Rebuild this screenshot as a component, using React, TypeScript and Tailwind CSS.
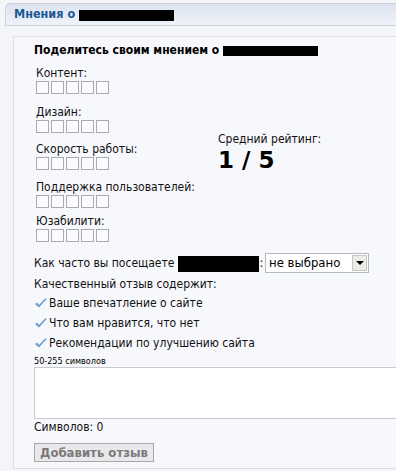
import React from 'react';

const font = { fontFamily: "Tahoma, 'DejaVu Sans Condensed', 'Liberation Sans', sans-serif" };

const Redacted = ({ w, h = 12 }: { w: number; h?: number }) => (
  <span className="inline-block bg-black align-middle" style={{ width: w, height: h }} />
);

const Stars = () => (
  <div className="flex gap-[2px] mt-[1px]">
    {[0, 1, 2, 3, 4].map((i) => (
      <span key={i} className="w-[13px] h-[13px] border border-[#a9abb0] bg-[#fafbfd]" />
    ))}
  </div>
);

const RatingRow = ({ label, className = '' }: { label: string; className?: string }) => (
  <div className={className}>
    <div className="text-[12px] leading-[14px] text-[#111]">{label}</div>
    <Stars />
  </div>
);

const Check = () => (
  <svg width="13" height="12" viewBox="0 0 13 12" className="mr-[2px] shrink-0">
    <path d="M1 7 L3 5.5 L5 8 L11.5 1 L12.5 2 L5 10.5 Z" fill="#6b9bd0" />
  </svg>
);

const tips = ['Ваше впечатление о сайте', 'Что вам нравится, что нет', 'Рекомендации по улучшению сайта'];

export default function App() {
  return (
    <div className="w-[396px] min-h-[471px] bg-[#f4f5f8] overflow-hidden pt-[3px]" style={font}>
      <div className="ml-[5px] h-[23px] flex items-center pl-[8px] rounded-tl-[5px] border-l border-t border-b border-[#cdd2db] bg-gradient-to-b from-[#dce3ef] to-[#eff3fa]">
        <span className="text-[12.5px] font-bold text-[#1c5894]">Мнения о</span>
        <span className="ml-[4px]"><Redacted w={95} h={11} /></span>
      </div>

      <div className="ml-[13px] mt-[10px] border-l border-t border-b border-[#dcdee3] bg-[#f7f8fc] pl-[20px] pt-[4px] pb-[4px]">
        <div className="flex items-center text-[12px] font-bold text-black">
          Поделитесь своим мнением о
          <span className="ml-[4px]"><Redacted w={95} h={10} /></span>
        </div>

        <div className="flex mt-[7px] pl-[2px]">
          <div className="w-[182px]">
            <RatingRow label="Контент:" />
            <RatingRow label="Дизайн:" className="mt-[11px]" />
            <RatingRow label="Скорость работы:" className="mt-[9px]" />
            <RatingRow label="Поддержка пользователей:" className="mt-[10px]" />
            <RatingRow label="Юзабилити:" className="mt-[6px]" />
          </div>
          <div className="pt-[66px]">
            <div className="text-[12px] leading-[14px] text-[#111]">Средний рейтинг:</div>
            <div className="text-[23px] leading-[24px] font-bold text-black mt-[2px]" style={{ fontFamily: "Verdana, 'DejaVu Sans', sans-serif" }}>1 / 5</div>
          </div>
        </div>

        <div className="flex items-center mt-[11px] text-[12px] text-[#111]">
          <span>Как часто вы посещаете</span>
          <span className="ml-[4px]"><Redacted w={81} h={16} /></span>
          <span>:</span>
          <div className="ml-[2px] flex items-center w-[104px] h-[20px] border border-[#b5b8c0] bg-white">
            <span className="flex-1 pl-[3px] text-[13px] text-black">не выбрано</span>
            <span className="w-[15px] h-[16px] mr-[1px] bg-[#ecebe6] border border-[#c9c7c0] flex items-center justify-center">
              <span className="w-0 h-0 border-l-[4px] border-r-[4px] border-t-[4px] border-l-transparent border-r-transparent border-t-black" />
            </span>
          </div>
        </div>

        <div className="mt-[3px] text-[12px] leading-[20px] text-[#111]">
          <div className="leading-[17px]">Качественный отзыв содержит:</div>
          {tips.map((t) => (
            <div key={t} className="flex items-center">
              <Check />
              <span>{t}</span>
            </div>
          ))}
        </div>

        <div className="mt-[3px] text-[9px] leading-[11px] text-black">50-255 символов</div>
        <textarea className="block w-[400px] h-[52px] border border-[#c8cacf] bg-white resize-none outline-none" />
        <div className="text-[12px] leading-[16px] text-[#111]">Символов: 0</div>
        <button className="mt-[8px] h-[19px] px-[5px] border border-[#a7a8aa] bg-[#e9e9eb] text-[13px] font-bold text-[#7a7a7a] leading-[17px]">
          Добавить отзыв
        </button>
      </div>
    </div>
  );
}
